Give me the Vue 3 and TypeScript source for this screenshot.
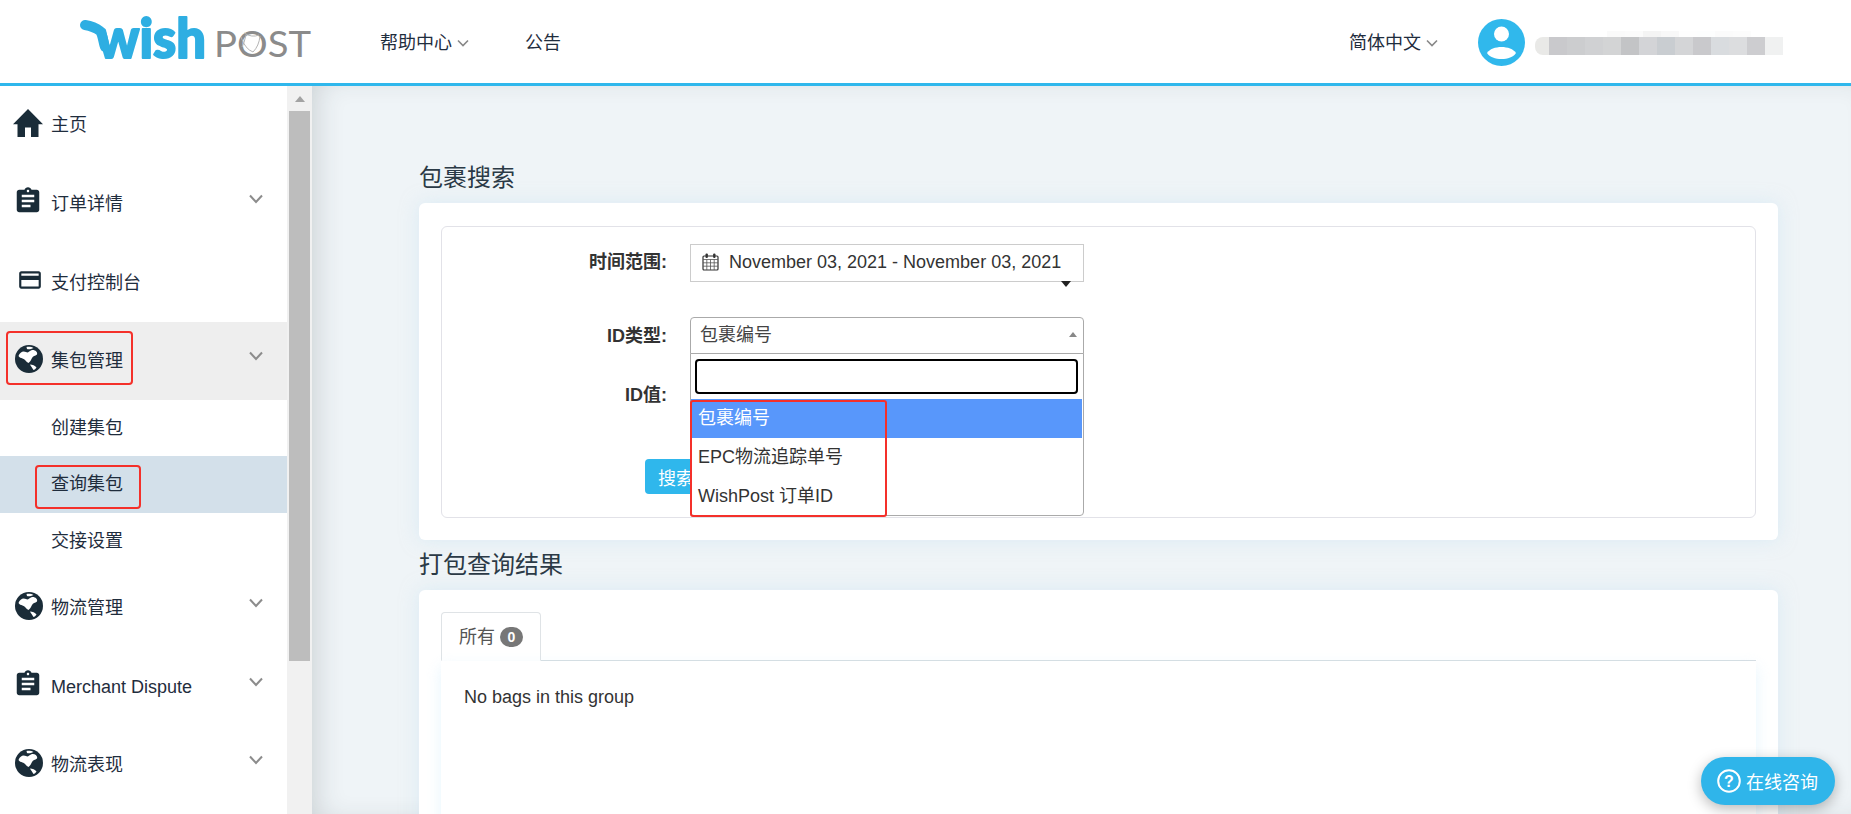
<script setup lang="ts">
interface NavRow {
  label: string
  icon: 'home' | 'clip' | 'card' | 'globe'
  chevron: boolean
  tall?: boolean
}
const topRows: NavRow[] = [
  { label: '主页', icon: 'home', chevron: false },
  { label: '订单详情', icon: 'clip', chevron: true },
  { label: '支付控制台', icon: 'card', chevron: false, tall: true }
]
const bottomRows: NavRow[] = [
  { label: '物流管理', icon: 'globe', chevron: true },
  { label: 'Merchant Dispute', icon: 'clip', chevron: true },
  { label: '物流表现', icon: 'globe', chevron: true }
]
const mosaicTop = ['#fff', '#fff', '#fff', '#fff', '#fafafa', '#fbfbfb', '#f4f4f4', '#f8f8f8', '#fefefe', '#fdfefe', '#fbfbfb', '#fcfcfc', '#fff', '#fff']
const mosaic = ['#e9e9e7', '#c9c9cc', '#cccdcf', '#d0d1d3', '#d3d4d5', '#c3c4c6', '#d3d4d7', '#c9cdd1', '#d4d5d7', '#c9c9cc', '#d9dcdf', '#dcdddf', '#cdcdd0', '#f0f1f1']
const continent = 'M3.5 11 C5 7 8 5.5 11 7 C13 8.5 14 6 17 5 C20 4.5 23 7 22 9.5 C20 11 18 11 17 13 C16 15 15 17 13.5 18 C11 17 10 14 7.5 13.5 C6 13 4.5 12.5 3.5 11 Z'
const arctic = 'M11.5 2 C14 1.5 17 2 18.5 3 C16 4.2 13.5 4.6 12 4 Z'
const southAmerica = 'M15 19.6 C17.5 19.6 20 20.8 21.5 22.4 C20.5 23.8 19.5 24.8 18.5 25 C17.5 23.5 16 21.5 15 19.6 Z'
</script>

<template>
  <div class="page">
    <header class="topbar">
      <svg class="logo" width="244" height="72" viewBox="76 0 244 72">
        <path d="M85 25 C91 26 96 28 100 31 C103 35 103 42 105 47" fill="none" stroke="#2eaee2" stroke-width="10" stroke-linecap="round" />
        <text x="97" y="58" class="logo-wish" textLength="109" lengthAdjust="spacingAndGlyphs">wish</text>
        <text x="214" y="57" class="logo-post" textLength="97" lengthAdjust="spacingAndGlyphs">POST</text>
        <g fill="none" stroke="#b4b4b4" stroke-width="1">
          <path d="M241 37 Q245 49 253 52 Q259 46 260 36" />
          <path d="M244 33 Q252 38 259 35 M246 35 Q244 44 242 47" />
        </g>
      </svg>
      <nav class="topnav">
        <span class="navitem">帮助中心<svg class="mini-chev" width="12" height="8" viewBox="0 0 12 8"><path d="M1 1.5 L6 6.5 L11 1.5" /></svg></span>
        <span class="navitem notice">公告</span>
      </nav>
      <div class="topright">
        <span class="navitem">简体中文<svg class="mini-chev" width="12" height="8" viewBox="0 0 12 8"><path d="M1 1.5 L6 6.5 L11 1.5" /></svg></span>
        <svg class="avatar" width="47" height="47" viewBox="0 0 47 47">
          <circle cx="23.5" cy="23.5" r="23.5" fill="#30b8ec" />
          <circle cx="23.5" cy="15" r="7.5" fill="#fff" />
          <path d="M9 34 C14 26 33 26 38 34 C33 42 14 42 9 34 Z" fill="#fff" />
        </svg>
        <div class="mosaic">
          <div class="mosaic-row faint"><i v-for="(c, i) in mosaicTop" :key="i" :style="{ background: c }"></i></div>
          <div class="mosaic-row"><i v-for="(c, i) in mosaic" :key="i" :style="{ background: c }"></i></div>
        </div>
      </div>
    </header>

    <div class="body">
      <aside class="side">
        <div class="menu">
          <div v-for="r in topRows" :key="r.label" class="row" :class="{ tall: r.tall }">
            <span class="icon">
              <svg v-if="r.icon === 'home'" width="30" height="28" viewBox="2 3 20 17.6" preserveAspectRatio="none"><path fill="#1a2c38" d="M10 20.6v-6h4v6h5v-8h3L12 3 2 12.6h3v8z" /></svg>
              <svg v-else-if="r.icon === 'clip'" width="30" height="32" viewBox="0 0 24 24"><path fill="#1a2c38" d="M19 3h-4.18C14.4 1.84 13.3 1 12 1c-1.3 0-2.4.84-2.82 2H5c-1.1 0-2 .9-2 2v14c0 1.1.9 2 2 2h14c1.1 0 2-.9 2-2V5c0-1.1-.9-2-2-2zm-7 0c.55 0 1 .45 1 1s-.45 1-1 1-1-.45-1-1 .45-1 1-1zm2 14H7v-2h7v2zm3-4H7v-2h10v2zm0-4H7V7h10v2z" /></svg>
              <svg v-else width="26" height="26" viewBox="0 0 24 24"><path fill="#1a2c38" d="M20 4H4c-1.11 0-1.99.89-1.99 2L2 18c0 1.11.89 2 2 2h16c1.11 0 2-.89 2-2V6c0-1.11-.89-2-2-2zm0 14H4v-6h16v6zm0-10H4V6h16v2z" /></svg>
            </span>
            <span class="label">{{ r.label }}</span>
            <svg v-if="r.chevron" class="chev" width="14" height="10" viewBox="0 0 14 10"><path d="M1 1.5 L7 8 L13 1.5" /></svg>
          </div>

          <div class="row active">
            <span class="icon">
              <svg width="28" height="28" viewBox="0 0 28 28">
                <circle cx="14" cy="14" r="14" fill="#1a2c38" />
                <path fill="#fff" :d="continent" />
                <path fill="#fff" :d="arctic" />
                <path fill="#fff" :d="southAmerica" />
              </svg>
            </span>
            <span class="label">集包管理</span>
            <svg class="chev" width="14" height="10" viewBox="0 0 14 10"><path d="M1 1.5 L7 8 L13 1.5" /></svg>
            <div class="redbox box-parent"></div>
          </div>
          <div class="sub sub-a">创建集包</div>
          <div class="sub sub-b selected">查询集包<div class="redbox box-sub"></div></div>
          <div class="sub sub-c">交接设置</div>

          <div v-for="r in bottomRows" :key="r.label" class="row">
            <span class="icon">
              <svg v-if="r.icon === 'globe'" width="28" height="28" viewBox="0 0 28 28">
                <circle cx="14" cy="14" r="14" fill="#1a2c38" />
                <path fill="#fff" :d="continent" />
                <path fill="#fff" :d="arctic" />
                <path fill="#fff" :d="southAmerica" />
              </svg>
              <svg v-else width="30" height="32" viewBox="0 0 24 24"><path fill="#1a2c38" d="M19 3h-4.18C14.4 1.84 13.3 1 12 1c-1.3 0-2.4.84-2.82 2H5c-1.1 0-2 .9-2 2v14c0 1.1.9 2 2 2h14c1.1 0 2-.9 2-2V5c0-1.1-.9-2-2-2zm-7 0c.55 0 1 .45 1 1s-.45 1-1 1-1-.45-1-1 .45-1 1-1zm2 14H7v-2h7v2zm3-4H7v-2h10v2zm0-4H7V7h10v2z" /></svg>
            </span>
            <span class="label">{{ r.label }}</span>
            <svg class="chev" width="14" height="10" viewBox="0 0 14 10"><path d="M1 1.5 L7 8 L13 1.5" /></svg>
          </div>
        </div>
        <div class="scrollbar">
          <div class="scroll-up"><span></span></div>
          <div class="scroll-thumb"></div>
        </div>
      </aside>

      <main class="main">
        <h2 class="title">包裹搜索</h2>
        <section class="card search-card">
          <div class="panel">
            <div class="form-row date-row">
              <label>时间范围:</label>
              <div class="date-box">
                <svg width="17" height="18" viewBox="0 0 17 18" class="cal">
                  <rect x="1" y="3" width="15" height="14" rx="1" fill="none" stroke="#333" stroke-width="1.2" />
                  <path d="M1 6.5H16 M1 9.8H16 M1 13.2H16 M4.8 6.5V17 M8.5 6.5V17 M12.2 6.5V17" stroke="#555" stroke-width="0.8" />
                  <rect x="3.5" y="0.5" width="2.4" height="4.5" rx="1" fill="#333" />
                  <rect x="11.1" y="0.5" width="2.4" height="4.5" rx="1" fill="#333" />
                </svg>
                <span>November 03, 2021 - November 03, 2021</span>
                <i class="date-caret"></i>
              </div>
            </div>
            <div class="form-row type-row">
              <label>ID类型:</label>
              <div class="select-wrap">
                <div class="select-head">包裹编号<i class="up-arrow"></i></div>
                <div class="dropdown">
                  <div class="search-wrap"><input class="search-input" type="text" /></div>
                  <div class="opt hl">包裹编号</div>
                  <div class="opt">EPC物流追踪单号</div>
                  <div class="opt">WishPost 订单ID</div>
                  <div class="redbox box-opts"></div>
                </div>
              </div>
            </div>
            <div class="form-row value-row">
              <label>ID值:</label>
              <div class="value-box"></div>
            </div>
            <div class="btn-row"><button class="btn" type="button">搜索</button></div>
          </div>
        </section>

        <h2 class="title second">打包查询结果</h2>
        <section class="card result-card">
          <div class="tabs">
            <div class="tab"><span class="tab-text">所有</span><span class="badge">0</span></div>
          </div>
          <div class="tab-body">No bags in this group</div>
        </section>
      </main>
    </div>

    <div class="chat">
      <svg width="24" height="24" viewBox="0 0 24 24">
        <circle cx="12" cy="12" r="10.8" fill="none" stroke="#fff" stroke-width="2" />
        <text x="12" y="17.5" text-anchor="middle" class="q">?</text>
      </svg>
      <span>在线咨询</span>
    </div>
  </div>
</template>

<style>
html, body { margin: 0; padding: 0; overflow: hidden; background: #eef3f7; }
</style>

<style scoped>
.page {
  position: relative;
  width: 1851px;
  height: 814px;
  overflow: hidden;
  display: flex;
  flex-direction: column;
  font-family: "Liberation Sans", "Noto Sans CJK SC", sans-serif;
  font-size: 18px;
  color: #1f2d3d;
}
.topbar {
  height: 81px;
  padding-top: 2px;
  flex: none;
  background: #fff;
  border-bottom: 3px solid #2fb7ec;
  display: flex;
  align-items: center;
  padding-left: 76px;
}
.logo { flex: none; align-self: flex-start; margin-top: -2px; }
.logo-wish { font-family: "Lato", sans-serif; font-weight: 900; font-size: 56px; fill: #2eaee2; stroke: #2eaee2; stroke-width: 2; stroke-linejoin: round; }
.logo-post { font-family: "Lato", sans-serif; font-weight: 400; font-size: 37.5px; fill: #8b8b8b; }
.topnav { display: flex; align-items: center; margin-left: 60px; }
.navitem { display: inline-flex; align-items: center; line-height: 24px; white-space: nowrap; }
.notice { margin-left: 56px; }
.mini-chev { margin-left: 5px; fill: none; stroke: #888; stroke-width: 1.6; }
.topright { margin-left: auto; display: flex; align-items: center; padding-right: 66px; }
.avatar { margin-left: 40px; }
.mosaic { margin-left: 10px; width: 250px; filter: blur(0.6px); }
.mosaic-row { display: flex; height: 18px; }
.mosaic-row.faint { height: 6px; }
.mosaic-row i { display: block; width: 18px; flex: none; }
.mosaic-row:last-child i:first-child { border-radius: 8px 0 0 8px; width: 14px; }

.body { flex: 1; display: flex; min-height: 0; }
.side { width: 312px; flex: none; display: flex; background: #fff; }
.menu { width: 287px; flex: none; background: #fff; }
.row { position: relative; height: 78.5px; display: flex; align-items: center; color: #1f2d3d; }
.row.tall { height: 79px; }
.row.active { height: 78px; background: #eee; }
.icon { width: 51px; height: 32px; flex: none; display: flex; align-items: center; justify-content: flex-end; padding-right: 8px; box-sizing: border-box; margin-top: -5px; }
.label { line-height: 24px; white-space: nowrap; }
.chev { position: absolute; left: 249px; top: 50%; margin-top: -10px; fill: none; stroke: #8c8c8c; stroke-width: 2; }
.sub { position: relative; padding-left: 51px; line-height: 56px; height: 56px; }
.sub-b { height: 57px; }
.sub-c { height: 56px; }
.selected { background: #d3e0ea; }
.redbox { position: absolute; border: 2px solid #f4302a; border-radius: 4px; box-sizing: border-box; pointer-events: none; }
.box-parent { left: 6px; top: 9px; width: 127px; height: 54px; }
.box-sub { left: 35px; top: 9px; width: 106px; height: 44px; }
.box-opts { left: -1px; top: 46px; width: 197px; height: 117px; border-radius: 3px; }

.scrollbar { width: 25px; flex: none; background: #f1f1f1; border-left: 2px solid #f1f1f1; box-sizing: border-box; border-right: 2px solid #f1f1f1; }
.scroll-up { height: 25px; display: flex; align-items: center; justify-content: center; }
.scroll-up span { width: 0; height: 0; border-left: 5px solid transparent; border-right: 5px solid transparent; border-bottom: 6px solid #a3a3a3; }
.scroll-thumb { height: 550px; background: #bdbdbd; }

.main {
  flex: 1;
  min-width: 0;
  background: #eff4f7;
  padding: 77px 73px 0 107px;
  box-shadow: inset 14px 0 30px -12px rgba(40, 50, 55, 0.2);
}
.title { margin: 0 0 10px; font-size: 24px; line-height: 30px; font-weight: 400; color: #2b3a46; }
.title.second { margin: 10px 0 10px; }
.card { background: #fff; border-radius: 6px; box-shadow: 0 0 18px rgba(200, 228, 243, 0.5); box-sizing: border-box; }
.search-card { height: 337px; padding: 23px 22px 22px; }
.panel { height: 292px; box-sizing: border-box; border: 1px solid #e2e2e8; border-radius: 6px; padding-top: 17px; }
.form-row { display: flex; align-items: center; }
.form-row label { width: 225px; flex: none; text-align: right; font-weight: 700; color: #333; margin-right: 23px; line-height: 24px; white-space: nowrap; }
.date-row label { margin-bottom: 2px; }
.date-box { position: relative; width: 394px; height: 38px; box-sizing: border-box; border: 1px solid #ccc; display: flex; align-items: center; padding: 0 0 2px 11px; color: #333; font-size: 18px; white-space: nowrap; }
.cal { margin-right: 10px; flex: none; }
.date-caret { position: absolute; right: 12px; bottom: -6px; width: 0; height: 0; border-left: 5px solid transparent; border-right: 5px solid transparent; border-top: 6px solid #222; }
.type-row { margin-top: 35px; position: relative; z-index: 2; }
.select-wrap { position: relative; width: 394px; }
.select-head { position: relative; height: 37px; box-sizing: border-box; border: 1px solid #aaa; border-radius: 4px 4px 0 0; padding-left: 9px; line-height: 34px; color: #444; }
.up-arrow { position: absolute; right: 6px; top: 14px; width: 0; height: 0; border-left: 4px solid transparent; border-right: 4px solid transparent; border-bottom: 5px solid #888; }
.dropdown { position: absolute; left: 0; right: 0; top: 36px; height: 163px; background: #fff; box-sizing: border-box; border: 1px solid #aaa; border-radius: 0 0 4px 4px; }
.search-wrap { padding: 5px 5px 5px 4px; height: 45px; box-sizing: border-box; }
.search-input { display: block; width: 100%; height: 35px; box-sizing: border-box; border: 2px solid #000; border-radius: 4px; outline: none; background: #fff; padding: 0; }
.opt { height: 39px; line-height: 38px; padding-left: 7px; color: #333; white-space: nowrap; margin-right: 1px; }
.opt.hl { background: #5897fb; color: #fff; }
.value-row { margin-top: 23px; height: 36px; }
.value-box { width: 394px; height: 36px; box-sizing: border-box; border: 1px solid #ccc; }
.btn-row { margin-top: 46px; padding-left: 203px; }
.btn { width: 90px; height: 35px; border: none; border-radius: 4px; background: #2fb7ec; color: #fff; font: inherit; text-align: left; padding-left: 13px; }

.result-card { height: 300px; padding: 22px 22px 0; }
.tabs { height: 49px; border-bottom: 1px solid #d6dde2; box-sizing: border-box; }
.tab { width: 100px; height: 49px; box-sizing: border-box; border: 1px solid #dfe3e6; border-bottom: 1px solid #fff; border-radius: 4px 4px 0 0; background: #fff; display: flex; align-items: center; padding-left: 17px; color: #555; }
.tab-text { margin-top: -3px; }
.badge { margin-left: 5px; width: 23px; height: 20px; border-radius: 10px; background: #777; color: #fff; font-size: 14px; font-weight: 700; text-align: center; line-height: 20px; }
.tab-body { height: 240px; padding: 24px 23px 0; box-shadow: 0 6px 14px rgba(200, 232, 250, 0.45); line-height: 24px; color: #333; box-sizing: border-box; }

.chat {
  position: absolute;
  left: 1701px;
  top: 757px;
  width: 134px;
  height: 48px;
  box-sizing: border-box;
  border-radius: 24px;
  background: #2fb5ea;
  box-shadow: 0 4px 14px rgba(0, 0, 0, 0.28);
  color: #fff;
  display: flex;
  align-items: center;
  padding-left: 16px;
  gap: 5px;
  white-space: nowrap;
}
.q { font-family: "Liberation Sans", sans-serif; font-size: 16px; font-weight: 700; fill: #fff; }
</style>
